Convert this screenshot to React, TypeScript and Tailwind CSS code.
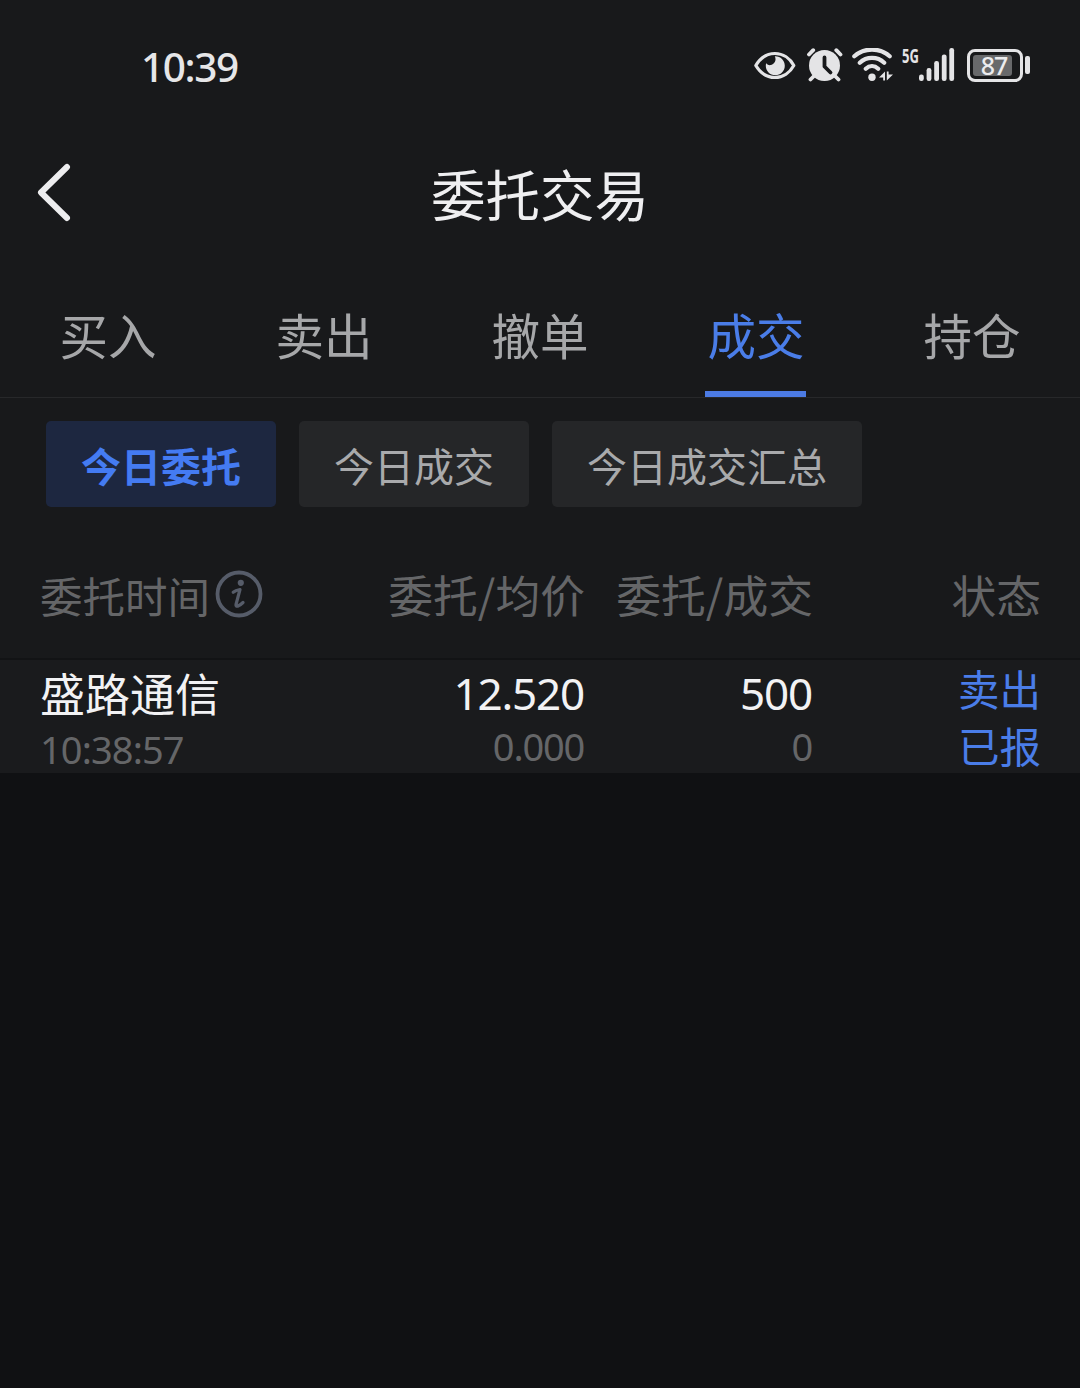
import clsx from "clsx";

const tabs = ["买入", "卖出", "撤单", "成交", "持仓"];
const filters = ["今日委托", "今日成交", "今日成交汇总"];

const orders = [
  {
    name: "盛路通信",
    time: "10:38:57",
    price: "12.520",
    avgPrice: "0.000",
    amount: "500",
    dealt: "0",
    side: "卖出",
    status: "已报",
  },
];

const EyeIcon = () => (
  <svg className="h-[34px] w-[42px]" viewBox="0 0 42 34" fill="none">
    <path
      d="M1.800 17.500C6 10.500 13 5.500 21 5.500S36 10.500 39.800 17.500C36 24.500 29 29.500 21 29.500S6 24.500 1.800 17.500Z"
      stroke="#e4e4e6"
      strokeWidth="3.200"
      strokeLinejoin="round"
    />
    <path
      d="M20.800 8.300C26.300 8 30.800 12.300 30.800 17.700C30.800 23 26.500 27.200 21.300 27.200C16 27.200 11.800 23 11.800 17.700C11.800 16.800 11.900 16 12.200 15.200C13.500 16.800 15.200 17.500 17 17C20.500 16 22.800 12.300 20.800 8.300Z"
      fill="#e4e4e6"
    />
  </svg>
);

const AlarmIcon = () => (
  <svg className="h-[34px] w-[36px]" viewBox="0 0 36 34" fill="none">
    <circle cx="17.500" cy="17.500" r="15.500" fill="#e4e4e6" />
    <path
      d="M2 6.500L6.200 2.200M33.500 6.500L29.300 2.200M7 28L3.500 31.500M28 28L31.500 31.500"
      stroke="#e4e4e6"
      strokeWidth="3.800"
      strokeLinecap="round"
    />
    <path
      d="M17.500 9.500V18.500L23.500 24.500"
      stroke="#18191b"
      strokeWidth="3.800"
      strokeLinecap="round"
      strokeLinejoin="round"
    />
  </svg>
);

const WifiIcon = () => (
  <svg className="h-[34px] w-[42px]" viewBox="0 0 42 34" fill="none">
    <path
      d="M2.300 8.300C12 -0.700 28 -0.700 37.700 8.300M7.800 14.800C14.500 8.300 25.500 8.300 32.200 14.800M13.800 20.700C17.500 17.200 22.500 17.200 26.200 20.700"
      stroke="#e4e4e6"
      strokeWidth="4.200"
      strokeLinecap="round"
    />
    <circle cx="20" cy="29.300" r="3.700" fill="#e4e4e6" />
    <path d="M33 23.500V32.500H31.200V29.500H27ZM34.800 23.500H36.600V26.500H41L34.800 32.500Z" fill="#e4e4e6" />
  </svg>
);

const SignalIcon = () => (
  <svg className="h-[34px] w-[36px]" viewBox="0 0 36 34">
    <g fill="#e4e4e6">
      <rect x="0" y="26.500" width="4.800" height="6.500" rx="2.200" />
      <rect x="7.600" y="20" width="4.800" height="13" rx="2.200" />
      <rect x="15.200" y="13" width="4.800" height="20" rx="2.200" />
      <rect x="22.800" y="6.500" width="4.800" height="26.500" rx="2.200" />
      <rect x="30.300" y="0" width="4.800" height="33" rx="2.200" />
    </g>
  </svg>
);

const StatusBar = () => (
  <div className="flex h-[130px] items-center justify-between pr-[50px] pl-[141px] font-['Noto_Sans',sans-serif]">
    <span className="pt-[4px] text-[40.5px] leading-none font-medium tracking-[-1.4px] text-[#e6e6e8]">
      10:39
    </span>
    <div className="flex items-center">
      <EyeIcon />
      <div className="ml-[11px]">
        <AlarmIcon />
      </div>
      <div className="ml-[9px]">
        <WifiIcon />
      </div>
      <span className="mt-[-19px] ml-[8px] w-[17px] text-[20px] leading-none font-bold text-[#e4e4e6]">
        <span className="inline-block origin-left scale-x-[0.65]">5G</span>
      </span>
      <SignalIcon />
      <div className="ml-[12px] flex h-[33px] w-[56px] items-center rounded-[8px] border-[3.5px] border-[#e4e4e6] p-[3px]">
        <div className="flex h-[21px] w-[39px] items-center justify-center rounded-[3px] bg-[#68696b] pl-[3px]">
          <span className="text-[25px] leading-none font-medium tracking-[-1px] text-[#ececee]">
            87
          </span>
        </div>
      </div>
      <div className="ml-[2px] h-[18px] w-[5px] rounded-[2px] bg-[#e4e4e6]" />
    </div>
  </div>
);

const InfoIcon = () => (
  <svg className="h-[48px] w-[48px]" viewBox="0 0 48 48" fill="none">
    <circle cx="24" cy="24" r="21.500" stroke="#565c69" strokeWidth="3.800" />
    <circle cx="25.800" cy="12.800" r="3.100" fill="#565c69" />
    <path
      d="M18.200 22.300C20 20.800 22.500 20 25 19.500L21 34.500C20.500 37.500 24 36.500 28 32.500"
      stroke="#565c69"
      strokeWidth="3.200"
      strokeLinecap="round"
      strokeLinejoin="round"
    />
  </svg>
);

const App = () => {
  return (
    <div className="flex min-h-[1388px] w-full flex-col bg-[#101113] font-['Noto_Sans_CJK_SC',sans-serif]">
      <div className="bg-[#18191b]">
        <StatusBar />

        <header className="grid h-[124px] grid-cols-[1fr_auto_1fr] items-center px-[36px]">
          <svg className="h-[60px] w-[38px]" viewBox="0 0 38 60" fill="none">
            <path
              d="M31 5L5 30.500L31 56"
              stroke="#ededef"
              strokeWidth="6"
              strokeLinecap="round"
              strokeLinejoin="round"
            />
          </svg>
          <h1 className="pt-[3px] text-[54.5px] leading-none text-[#efeff1]">
            委托交易
          </h1>
        </header>

        <nav className="grid h-[144px] grid-cols-5 border-b border-[#27282a]">
          {tabs.map((tab) => (
            <div key={tab} className="flex flex-col items-center justify-end">
              <span
                className={clsx(
                  "text-[48.5px] leading-none",
                  tab === "成交" ? "text-[#4a7de8]" : "text-[#a6a7a9]"
                )}
              >
                {tab}
              </span>
              <div
                className={clsx(
                  "mt-[33px] mr-[1px] h-[6px] w-[101px]",
                  tab === "成交" && "bg-[#4c7be4]"
                )}
              />
            </div>
          ))}
        </nav>

        <div className="flex h-[132px] gap-[23px] px-[46px] pt-[23px]">
          {filters.map((filter, i) => (
            <button
              key={filter}
              className={clsx(
                "flex h-[86px] items-center rounded-[5px] px-[35px] pt-[1px] text-[40px] leading-none",
                i === 0
                  ? "bg-[#1d2740] font-bold text-[#447bf2]"
                  : "bg-[#252628] text-[#a9aaac]"
              )}
            >
              {filter}
            </button>
          ))}
        </div>

        <div className="grid h-[130px] grid-cols-[317px_228px_228px_228px] items-center border-b-2 border-[#121315] pl-[40px] text-right text-[44.8px] leading-none text-[#656668]">
          <div className="flex items-center text-[42.5px]">
            <span className="pt-[2px]">委托时间</span>
            <div className="ml-[5px]">
              <InfoIcon />
            </div>
          </div>
          <div>委托/均价</div>
          <div>委托/成交</div>
          <div>状态</div>
        </div>

        {orders.map((order) => (
          <div
            key={order.time}
            className="grid h-[113px] grid-cols-[317px_228px_228px_228px] bg-[#1a1b1d] pl-[40px] text-right leading-none"
          >
            <div className="flex flex-col pt-[10px] text-left">
              <span className="text-[45px] text-[#f2f2f4]">{order.name}</span>
              <span className="mt-[15px] font-['Noto_Sans',sans-serif] text-[38px] tracking-[-0.9px] text-[#656668]">
                {order.time}
              </span>
            </div>
            <div className="flex flex-col pt-[11px] pr-[1px] font-['Noto_Sans',sans-serif] tracking-[-1.2px]">
              <span className="text-[44px] text-[#f2f2f4]">{order.price}</span>
              <span className="mt-[12px] text-[38px] text-[#656668]">
                {order.avgPrice}
              </span>
            </div>
            <div className="flex flex-col pt-[11px] pr-[1px] font-['Noto_Sans',sans-serif] tracking-[-1.2px]">
              <span className="text-[44px] text-[#f2f2f4]">{order.amount}</span>
              <span className="mt-[12px] text-[38px] text-[#656668]">
                {order.dealt}
              </span>
            </div>
            <div className="flex flex-col pt-[8px] text-[41.5px] text-[#4a7de8]">
              <span>{order.side}</span>
              <span className="mt-[15px]">{order.status}</span>
            </div>
          </div>
        ))}
      </div>
    </div>
  );
};

export default App;
